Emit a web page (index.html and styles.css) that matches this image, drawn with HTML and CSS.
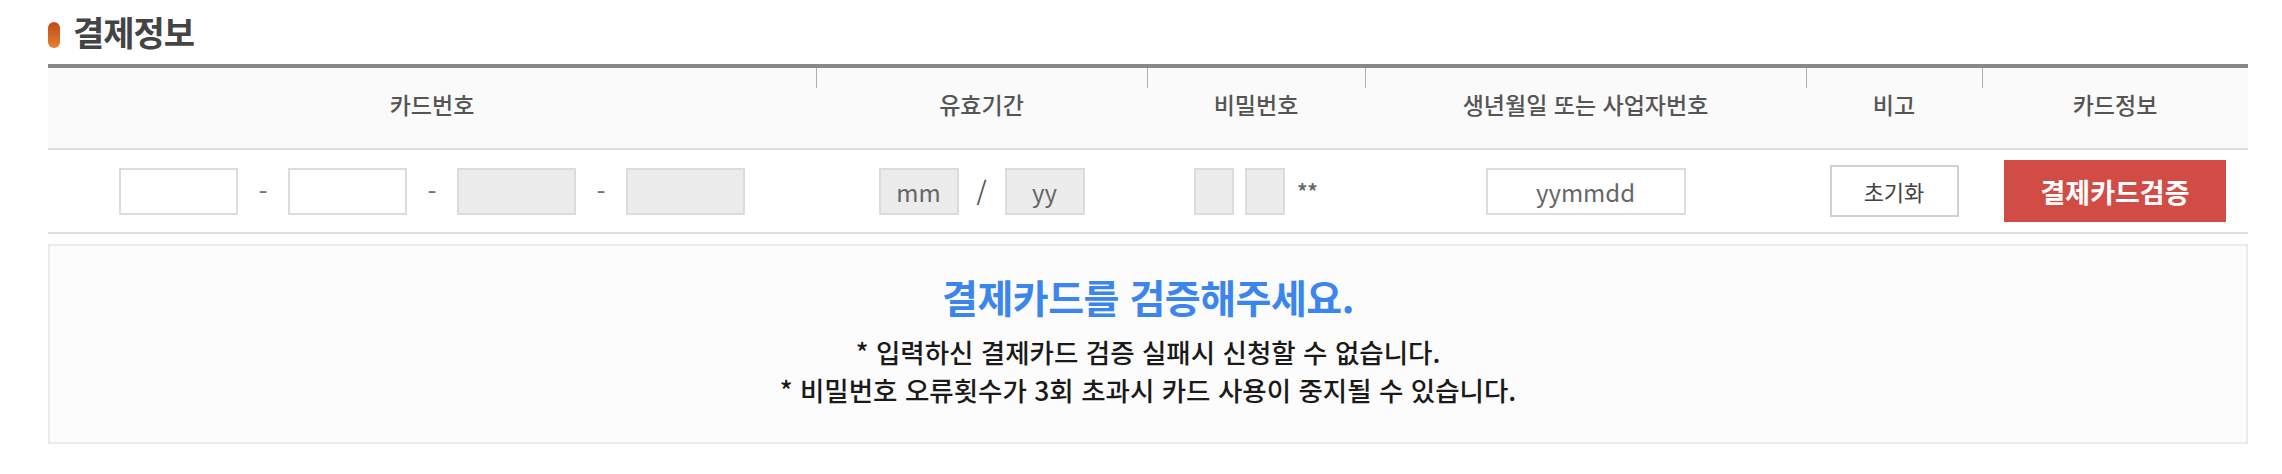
FILE: index.html
```html
<!DOCTYPE html>
<html lang="ko">
<head>
<meta charset="utf-8">
<title>결제정보</title>
<link rel="stylesheet" href="styles.css">
</head>
<body>
<div class="page">
  <h2 class="title"><span class="title-mark"></span>결제정보</h2>

  <div class="pay-grid">
    <div class="th">카드번호</div>
    <div class="th">유효기간</div>
    <div class="th">비밀번호</div>
    <div class="th">생년월일 또는 사업자번호</div>
    <div class="th">비고</div>
    <div class="th">카드정보</div>

    <div class="td">
      <div class="card-no">
        <input class="field card" type="text">
        <span class="dash">-</span>
        <input class="field card" type="text">
        <span class="dash">-</span>
        <input class="field card readonly" type="text" readonly>
        <span class="dash">-</span>
        <input class="field card readonly" type="text" readonly>
      </div>
    </div>
    <div class="td">
      <div class="expiry">
        <input class="field short readonly" type="text" placeholder="mm" readonly>
        <span class="slash">/</span>
        <input class="field short readonly" type="text" placeholder="yy" readonly>
      </div>
    </div>
    <div class="td">
      <div class="pw">
        <input class="field pin readonly" type="password" readonly>
        <input class="field pin readonly" type="password" readonly>
        <span class="stars">**</span>
      </div>
    </div>
    <div class="td">
      <input class="field birth" type="text" placeholder="yymmdd">
    </div>
    <div class="td">
      <button class="btn-reset" type="button">초기화</button>
    </div>
    <div class="td">
      <button class="btn-verify" type="button">결제카드검증</button>
    </div>
  </div>

  <div class="notice">
    <p class="notice-head">결제카드를 검증해주세요.</p>
    <p class="notice-line">* 입력하신 결제카드 검증 실패시 신청할 수 없습니다.</p>
    <p class="notice-line">* 비밀번호 오류횟수가 3회 초과시 카드 사용이 중지될 수 있습니다.</p>
  </div>
</div>
</body>
</html>
```

FILE: styles.css
```css
* {
  box-sizing: border-box;
}

html, body {
  margin: 0;
  padding: 0;
  background: #ffffff;
}

body {
  font-family: "Noto Sans CJK KR", "Noto Sans", sans-serif;
  color: #333;
}

.page {
  width: 2200px;
  margin-left: 48px;
  padding-top: 12px;
}

.title {
  display: flex;
  align-items: center;
  margin: 0 0 12px 0;
  height: 40px;
  line-height: 40px;
  font-size: 34px;
  font-weight: 700;
  letter-spacing: -1px;
  color: #444;
}

.title-mark {
  width: 12px;
  height: 26px;
  margin-top: 6px;
  margin-right: 13px;
  border-radius: 6px;
  background: linear-gradient(#c24c18, #e3802f);
}

.pay-grid {
  display: grid;
  grid-template-columns: 768px 331px 218px 441px 176px 266px;
  border-top: 4px solid #888;
}

.th {
  height: 82px;
  display: flex;
  align-items: center;
  justify-content: center;
  padding-bottom: 8px;
  background-color: #fafafa;
  border-bottom: 2px solid #dedede;
  font-size: 23px;
  font-weight: 500;
  color: #555;
}

.th + .th {
  background-image: linear-gradient(#b0b0b0, #b0b0b0);
  background-repeat: no-repeat;
  background-size: 1px 20px;
  background-position: left top;
}

.td {
  height: 84px;
  display: flex;
  align-items: center;
  justify-content: center;
  border-bottom: 2px solid #e0e0e0;
}

.field {
  height: 47px;
  border: 2px solid #dcdcdc;
  background: #fff;
  padding: 0;
  margin: 0;
  font-family: "Noto Sans CJK KR", "Noto Sans", sans-serif;
  font-size: 24px;
  color: #666;
  text-align: center;
  outline: none;
}

.field::placeholder {
  color: #666;
  opacity: 1;
}

.field.readonly {
  background: #ececec;
}

.card-no {
  display: flex;
  align-items: center;
  gap: 19px;
}

.field.card {
  width: 119px;
}

.dash {
  width: 12px;
  text-align: center;
  font-size: 26px;
  color: #777;
  line-height: 1;
}

.expiry {
  display: flex;
  align-items: center;
}

.field.short {
  width: 80px;
}

.slash {
  width: 46px;
  text-align: center;
  font-size: 26px;
  color: #555;
  line-height: 1;
}

.pw {
  display: flex;
  align-items: center;
  gap: 11px;
}

.field.pin {
  width: 40px;
}

.stars {
  margin-left: 1px;
  font-size: 20px;
  font-weight: 700;
  color: #666;
  line-height: 1;
}

.field.birth {
  width: 200px;
}

.btn-reset {
  width: 129px;
  height: 52px;
  border: 2px solid #d0d0d0;
  background: #fff;
  font-family: "Noto Sans CJK KR", "Noto Sans", sans-serif;
  font-size: 22px;
  color: #444;
  padding: 0;
  cursor: pointer;
}

.btn-verify {
  width: 222px;
  height: 62px;
  border: none;
  background: #d24c46;
  font-family: "Noto Sans CJK KR", "Noto Sans", sans-serif;
  font-size: 27px;
  font-weight: 700;
  color: #fff;
  padding: 0;
  cursor: pointer;
}

.notice {
  margin-top: 10px;
  border: 2px solid #ebebeb;
  background: #fcfcfc;
  padding: 27px 0 33px;
  text-align: center;
}

.notice-head {
  margin: 0 0 14px;
  font-size: 39px;
  line-height: 46px;
  font-weight: 700;
  letter-spacing: -0.5px;
  color: #3a86ee;
}

.notice-line {
  margin: 0;
  font-size: 26.5px;
  line-height: 38px;
  font-weight: 500;
  color: #1a1a1a;
}
```
